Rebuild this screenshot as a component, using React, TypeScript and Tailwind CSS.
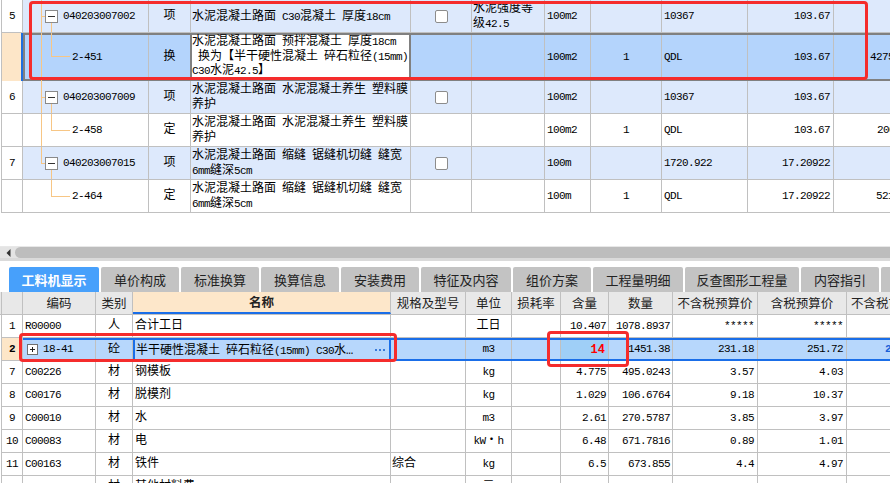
import React from "react";

const CJK_SPLIT = /([\u2026\u3000-\u303f\u30fb\u4e00-\u9fff\uff00-\uffef]+)/;
const CJK_TEST = /[\u2026\u3000-\u303f\u30fb\u4e00-\u9fff\uff00-\uffef]/;

function T({ s }: { s: string }) {
  const parts = s.split(CJK_SPLIT).filter((p) => p !== "");
  return (
    <>
      {parts.map((p, i) =>
        CJK_TEST.test(p) ? (
          <span key={i} className="text-[12px]">
            {p}
          </span>
        ) : (
          <span key={i} className="text-[11px] tracking-[-0.6px]">
            {p}
          </span>
        )
      )}
    </>
  );
}

function Checkbox() {
  return <div className="w-[13px] h-[13px] border border-[#8c8c8c] rounded-[2px] bg-white" />;
}

type TopRowData = {
  num: string;
  code: string;
  child: boolean;
  type: string;
  name: string[];
  chk: boolean;
  feat?: string[];
  unit: string;
  q: string;
  c8: string;
  c9: string;
  c10: string;
  c10pl: string;
  outer: "full" | "top" | "none";
};

const LINE = "bg-[#f7c685]";

function Tree({ child, outer, mid }: { child: boolean; outer: "full" | "top" | "none"; mid: string }) {
  return (
    <>
      {outer === "full" && <div className={`absolute left-[40px] top-0 bottom-0 w-px ${LINE}`} />}
      {outer === "top" && <div className={`absolute left-[40px] top-0 h-[16px] w-px ${LINE}`} />}
      {!child && (
        <>
          {outer !== "none" && <div className={`absolute left-[40px] top-[16px] w-[5px] h-px ${LINE}`} />}
          <div className={`absolute left-[50px] top-[23px] bottom-0 w-px ${LINE}`} />
          <div className="absolute left-[44px] top-[10px] w-[13px] h-[13px] border border-[#8a8a8a] bg-white flex items-center justify-center">
            <div className="w-[7px] h-px bg-[#333]" />
          </div>
        </>
      )}
      {child && (
        <>
          <div className={`absolute left-[50px] top-0 w-px ${LINE} ${mid === "23" ? "h-[23px]" : "h-[16px]"}`} />
          <div className={`absolute left-[50px] w-[19px] h-px ${LINE} ${mid === "23" ? "top-[23px]" : "top-[16px]"}`} />
        </>
      )}
    </>
  );
}

const BC = "border-[#c0c0c0]";

function TopRow({ r }: { r: TopRowData }) {
  const bg = r.child ? "bg-white" : "bg-[#dde9fc]";
  return (
    <div className={`relative flex h-[33px] border-b ${BC} ${bg}`}>
      <div className={`w-[22px] shrink-0 bg-white border-l border-r ${BC} flex items-center justify-center`}>
        <T s={r.num} />
      </div>
      <div className={`w-[126px] shrink-0 border-r ${BC} flex items-center ${r.child ? "pl-[49px]" : "pl-[40px]"}`}>
        <T s={r.code} />
      </div>
      <div className={`w-[42px] shrink-0 border-r ${BC} flex items-center justify-center text-[12px]`}>{r.type}</div>
      <div className={`w-[220px] shrink-0 border-r ${BC} flex flex-col justify-center pl-[1px] leading-[14px] whitespace-pre`}>
        {r.name.map((l, i) => (
          <div key={i}>
            <T s={l} />
          </div>
        ))}
      </div>
      <div className={`w-[61px] shrink-0 border-r ${BC} flex items-center justify-center`}>{r.chk && <Checkbox />}</div>
      <div className={`w-[73px] shrink-0 border-r ${BC} flex flex-col justify-center pl-[1px] leading-[14px]`}>
        {(r.feat || []).map((l, i) => (
          <div key={i}>
            <T s={l} />
          </div>
        ))}
      </div>
      <div className={`w-[46px] shrink-0 border-r ${BC} flex items-center pl-[2px]`}>
        <T s={r.unit} />
      </div>
      <div className={`w-[71px] shrink-0 border-r ${BC} flex items-center justify-center`}>
        <T s={r.q} />
      </div>
      <div className={`w-[86px] shrink-0 border-r ${BC} flex items-center pl-[2px]`}>
        <T s={r.c8} />
      </div>
      <div className={`w-[86px] shrink-0 border-r ${BC} flex items-center justify-end pr-[3px]`}>
        <T s={r.c9} />
      </div>
      <div className={`w-[120px] shrink-0 flex items-center ${r.c10pl}`}>
        <T s={r.c10} />
      </div>
      <Tree child={r.child} outer={r.outer} mid="16" />
    </div>
  );
}

function SelectedTopRow() {
  return (
    <div className="relative flex h-[48px]">
      <div className={`w-[22px] shrink-0 bg-[#fde6c8] border-l ${BC} border-r-2 border-r-[#1e6fe0]`} />
      <div className="flex flex-1 border-y-2 border-l-2 border-[#808080] bg-[#b4d4fc]">
        <div className={`w-[124px] shrink-0 border-r ${BC} flex items-center pl-[47px]`}>
          <T s="2-451" />
        </div>
        <div className="w-[41px] shrink-0 flex items-center justify-center text-[12px]">换</div>
        <div className="w-[221px] shrink-0 border-x-2 border-[#808080] bg-white flex flex-col justify-center pl-[0px] leading-[13.5px] whitespace-pre">
          <div>
            <T s="水泥混凝土路面 预拌混凝土 厚度18cm" />
          </div>
          <div>
            <T s=" 换为【半干硬性混凝土 碎石粒径(15mm)" />
          </div>
          <div>
            <T s="C30水泥42.5】" />
          </div>
        </div>
        <div className={`w-[61px] shrink-0 border-r ${BC}`} />
        <div className={`w-[73px] shrink-0 border-r ${BC}`} />
        <div className={`w-[46px] shrink-0 border-r ${BC} flex items-center pl-[2px]`}>
          <T s="100m2" />
        </div>
        <div className={`w-[71px] shrink-0 border-r ${BC} flex items-center justify-center`}>
          <T s="1" />
        </div>
        <div className={`w-[86px] shrink-0 border-r ${BC} flex items-center pl-[2px]`}>
          <T s="QDL" />
        </div>
        <div className={`w-[86px] shrink-0 border-r ${BC} flex items-center justify-end pr-[3px]`}>
          <T s="103.67" />
        </div>
        <div className="w-[120px] shrink-0 flex items-center pl-[36px]">
          <T s="42751.55" />
        </div>
      </div>
      <Tree child={true} outer="full" mid="23" />
    </div>
  );
}

const topRows: TopRowData[] = [
  {
    num: "5",
    code: "040203007002",
    child: false,
    type: "项",
    name: ["水泥混凝土路面 C30混凝土 厚度18cm"],
    chk: true,
    feat: ["水泥强度等", "级42.5"],
    unit: "100m2",
    q: "",
    c8: "10367",
    c9: "103.67",
    c10: "",
    c10pl: "pl-[36px]",
    outer: "full",
  },
  {
    num: "6",
    code: "040203007009",
    child: false,
    type: "项",
    name: ["水泥混凝土路面 水泥混凝土养生 塑料膜", "养护"],
    chk: true,
    unit: "100m2",
    q: "",
    c8: "10367",
    c9: "103.67",
    c10: "",
    c10pl: "pl-[36px]",
    outer: "full",
  },
  {
    num: "",
    code: "2-458",
    child: true,
    type: "定",
    name: ["水泥混凝土路面 水泥混凝土养生 塑料膜", "养护"],
    chk: false,
    unit: "100m2",
    q: "1",
    c8: "QDL",
    c9: "103.67",
    c10: "2000.96",
    c10pl: "pl-[43px]",
    outer: "full",
  },
  {
    num: "7",
    code: "040203007015",
    child: false,
    type: "项",
    name: ["水泥混凝土路面 缩缝 锯缝机切缝 缝宽", "6mm缝深5cm"],
    chk: true,
    unit: "100m",
    q: "",
    c8: "1720.922",
    c9: "17.20922",
    c10: "",
    c10pl: "pl-[36px]",
    outer: "top",
  },
  {
    num: "",
    code: "2-464",
    child: true,
    type: "定",
    name: ["水泥混凝土路面 缩缝 锯缝机切缝 缝宽", "6mm缝深5cm"],
    chk: false,
    unit: "100m",
    q: "1",
    c8: "QDL",
    c9: "17.20922",
    c10: "5210.58",
    c10pl: "pl-[42px]",
    outer: "none",
  },
];

const tabs: { label: string; w: string }[] = [
  { label: "工料机显示", w: "w-[90px]" },
  { label: "单价构成", w: "w-[78px]" },
  { label: "标准换算", w: "w-[78px]" },
  { label: "换算信息", w: "w-[78px]" },
  { label: "安装费用", w: "w-[78px]" },
  { label: "特征及内容", w: "w-[90px]" },
  { label: "组价方案", w: "w-[78px]" },
  { label: "工程量明细", w: "w-[90px]" },
  { label: "反查图形工程量", w: "w-[114px]" },
  { label: "内容指引", w: "w-[78px]" },
  { label: "", w: "w-[40px]" },
];

const headCols: { label: string; w: string }[] = [
  { label: "", w: "w-[22px]" },
  { label: "编码", w: "w-[73px]" },
  { label: "类别", w: "w-[37px]" },
  { label: "名称", w: "w-[258px]" },
  { label: "规格及型号", w: "w-[75px]" },
  { label: "单位", w: "w-[46px]" },
  { label: "损耗率", w: "w-[49px]" },
  { label: "含量", w: "w-[48px]" },
  { label: "数量", w: "w-[64px]" },
  { label: "不含税预算价", w: "w-[85px]" },
  { label: "含税预算价", w: "w-[89px]" },
  { label: "不含税市场价", w: "w-[84px]" },
];

type BotRow = {
  n: string;
  code: string;
  type: string;
  name: string;
  spec: string;
  unit: string;
  qty: string;
  amt: string;
  p1: string;
  p2: string;
};

const botRows: BotRow[] = [
  { n: "7", code: "C00226", type: "材", name: "钢模板", spec: "", unit: "kg", qty: "4.775", amt: "495.0243", p1: "3.57", p2: "4.03" },
  { n: "8", code: "C00176", type: "材", name: "脱模剂", spec: "", unit: "kg", qty: "1.029", amt: "106.6764", p1: "9.18", p2: "10.37" },
  { n: "9", code: "C00010", type: "材", name: "水", spec: "", unit: "m3", qty: "2.61", amt: "270.5787", p1: "3.85", p2: "3.97" },
  { n: "10", code: "C00083", type: "材", name: "电", spec: "", unit: "kW・h", qty: "6.48", amt: "671.7816", p1: "0.89", p2: "1.01" },
  { n: "11", code: "C00163", type: "材", name: "铁件", spec: "综合", unit: "kg", qty: "6.5", amt: "673.855", p1: "4.4", p2: "4.97" },
  { n: "", code: "", type: "材", name: "其他材料费", spec: "", unit: "元", qty: "", amt: "", p1: "", p2: "" },
];

function BottomRow({ r }: { r: BotRow }) {
  return (
    <div className={`flex h-[23px] shrink-0 border-b ${BC}`}>
      <div className={`w-[22px] shrink-0 border-l border-r ${BC} flex items-center justify-center`}>
        <T s={r.n} />
      </div>
      <div className={`w-[73px] shrink-0 border-r ${BC} flex items-center pl-[2px]`}>
        <T s={r.code} />
      </div>
      <div className={`w-[37px] shrink-0 border-r ${BC} flex items-center justify-center`}>
        <T s={r.type} />
      </div>
      <div className={`w-[258px] shrink-0 border-r ${BC} flex items-center pl-[2px]`}>
        <T s={r.name} />
      </div>
      <div className={`w-[75px] shrink-0 border-r ${BC} flex items-center pl-[1px]`}>
        <T s={r.spec} />
      </div>
      <div className={`w-[46px] shrink-0 border-r ${BC} flex items-center justify-center`}>
        <T s={r.unit} />
      </div>
      <div className={`w-[49px] shrink-0 border-r ${BC}`} />
      <div className={`w-[48px] shrink-0 border-r ${BC} flex items-center justify-end pr-[2px]`}>
        <T s={r.qty} />
      </div>
      <div className={`w-[64px] shrink-0 border-r ${BC} flex items-center justify-end pr-[2px]`}>
        <T s={r.amt} />
      </div>
      <div className={`w-[85px] shrink-0 border-r ${BC} flex items-center justify-end pr-[3px]`}>
        <T s={r.p1} />
      </div>
      <div className={`w-[89px] shrink-0 border-r ${BC} flex items-center justify-end pr-[3px]`}>
        <T s={r.p2} />
      </div>
      <div className="w-[84px] shrink-0" />
    </div>
  );
}

export default function App() {
  return (
    <div className="relative w-[890px] h-[483px] overflow-hidden bg-white text-black font-['Liberation_Mono','Noto_Sans_CJK_SC',monospace]">
      {/* top table */}
      <div className="h-[246px] pl-[1px] overflow-hidden">
        <div className="w-[1000px]">
          <TopRow r={topRows[0]} />
          <SelectedTopRow />
          {topRows.slice(1).map((r, i) => (
            <TopRow key={i} r={r} />
          ))}
        </div>
      </div>

      {/* horizontal scrollbar */}
      <div className="h-[15px] bg-[#e4e4e4] flex flex-col">
        <div className="h-[1px] bg-[#e8e8e8]" />
        <div className="flex h-[11px] items-center">
          <div className="w-[15px] h-full flex items-center justify-center pl-[1px]">
            <svg width="5" height="8" viewBox="0 0 5 8">
              <path d="M4.5 0 L0.5 4 L4.5 8 Z" fill="#333" />
            </svg>
          </div>
          <div className="flex-1 h-full rounded-l-[6px] bg-[#bdbdbd]" />
        </div>
        <div className="flex-1 bg-[#dadada]" />
      </div>
      <div className="h-[6px] bg-white" />

      {/* tabs */}
      <div className="h-[25px] flex gap-[2px] pl-[9px] font-['Noto_Sans_CJK_SC',sans-serif]">
        {tabs.map((t, i) => (
          <div
            key={i}
            className={`${t.w} shrink-0 h-full rounded-t-[2px] flex items-center justify-center text-[13px] ${
              i === 0 ? "bg-[#47a0fb] text-white font-bold" : "bg-[#c3c3c3] text-[#222]"
            }`}
          >
            {t.label}
          </div>
        ))}
      </div>

      {/* header */}
      <div className={`h-[23px] pl-[1px] flex bg-[#e8e8e8] border-b ${BC} font-['Noto_Sans_CJK_SC',sans-serif] text-[12.5px] text-[#222]`}>
        {headCols.map((c, i) => (
          <div
            key={i}
            className={`${c.w} shrink-0 flex items-center justify-center border-r ${BC} ${i === 0 ? "border-l" : ""} ${
              i === 3 ? "bg-[#fde7ca] font-bold border-b-2 border-b-[#1a6ee8]" : ""
            }`}
          >
            {c.label}
          </div>
        ))}
      </div>

      {/* bottom rows */}
      <div className="pl-[1px] flex flex-col">
        <BottomRow
          r={{ n: "1", code: "R00000", type: "人", name: "合计工日", spec: "", unit: "工日", qty: "10.407", amt: "1078.8937", p1: "*****", p2: "*****" }}
        />
        <div className="flex h-[23px] shrink-0">
          <div className={`w-[22px] shrink-0 border-l border-r border-b ${BC} bg-[#fde6c8] flex items-center justify-center font-bold`}>
            <T s="2" />
          </div>
          <div className="flex flex-1 border-y-2 border-[#1a6ee8] bg-[#b7d7fc]">
            <div className={`w-[73px] shrink-0 border-r ${BC} flex items-center pl-[4px] gap-[5px]`}>
              <div className="relative w-[11px] h-[11px] border border-[#707070] bg-white">
                <div className="absolute left-[2px] top-[4px] w-[5px] h-px bg-[#222]" />
                <div className="absolute left-[4px] top-[2px] w-px h-[5px] bg-[#222]" />
              </div>
              <T s="18-41" />
            </div>
            <div className={`w-[37px] shrink-0 border-r ${BC} flex items-center justify-center`}>
              <T s="砼" />
            </div>
            <div className="w-[258px] shrink-0 border-x-2 border-[#1a6ee8] flex items-center justify-between pl-[1px] pr-[4px]">
              <span>
                <T s="半干硬性混凝土 碎石粒径(15mm) C30水…" />
              </span>
              <span className="flex gap-[2px] items-center">
                <span className="w-[2px] h-[2px] bg-[#3a7ad8]" />
                <span className="w-[2px] h-[2px] bg-[#3a7ad8]" />
                <span className="w-[2px] h-[2px] bg-[#3a7ad8]" />
              </span>
            </div>
            <div className={`w-[75px] shrink-0 border-r ${BC}`} />
            <div className={`w-[46px] shrink-0 border-r ${BC} flex items-center justify-center`}>
              <T s="m3" />
            </div>
            <div className={`w-[49px] shrink-0 border-r ${BC}`} />
            <div className={`w-[48px] shrink-0 border-r ${BC} bg-[#9fcff7] flex items-center justify-end pr-[3px]`}>
              <span className="text-[12px] font-bold text-[#ff0000]">14</span>
            </div>
            <div className={`w-[64px] shrink-0 border-r ${BC} flex items-center justify-end pr-[2px]`}>
              <T s="1451.38" />
            </div>
            <div className={`w-[85px] shrink-0 border-r ${BC} flex items-center justify-end pr-[3px]`}>
              <T s="231.18" />
            </div>
            <div className={`w-[89px] shrink-0 border-r ${BC} flex items-center justify-end pr-[3px]`}>
              <T s="251.72" />
            </div>
            <div className="w-[84px] shrink-0 flex items-center pl-[38px] font-bold text-[#1a5fd8]">
              <T s="218.62" />
            </div>
          </div>
        </div>
        {botRows.map((r, i) => (
          <BottomRow key={i} r={r} />
        ))}
      </div>

      {/* red annotation boxes */}
      <div className="absolute left-[29px] top-[1px] w-[839px] h-[79px] border-[3px] border-[#f52c2c] rounded-[4px] pointer-events-none" />
      <div className="absolute left-[19px] top-[333px] w-[378px] h-[29px] border-[3px] border-[#f52c2c] rounded-[4px] pointer-events-none" />
      <div className="absolute left-[547px] top-[331px] w-[82px] h-[36px] border-[3px] border-[#f52c2c] rounded-[4px] pointer-events-none" />
    </div>
  );
}
